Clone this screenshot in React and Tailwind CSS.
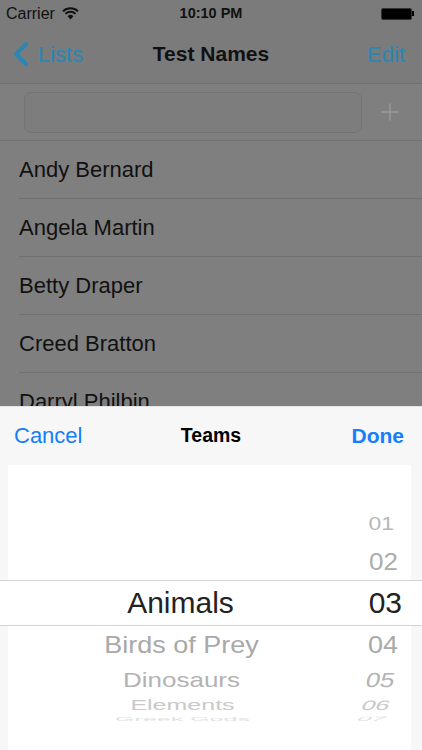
import { ChevronLeft, Plus } from "lucide-react";

const names = ["Andy Bernard", "Angela Martin", "Betty Draper", "Creed Bratton", "Darryl Philbin"];

// picker rows above / below the selection band
const above = [
  { h: 38, num: "01", size: 23, sy: 0.8, color: "#b8b8b8", nr: 28 },
  { h: 37, num: "02", size: 26, sy: 0.92, color: "#acacac", nr: 24 },
];
const below = [
  { h: 38, label: "Birds of Prey", num: "04", size: 27, sy: 0.9, color: "#a9a9a9", nr: 24, lx: 2 },
  { h: 32, label: "Dinosaurs", num: "05", size: 26, sy: 0.78, color: "#b3b3b3", nr: 27, lx: 2, sk: -10 },
  { h: 18, label: "Elements", num: "06", size: 25, sy: 0.55, color: "#c9c9c9", nr: 32, lx: 4, sk: -14 },
  { h: 8, label: "Greek Gods", num: "07", size: 25, sy: 0.25, color: "#e0e0e0", nr: 36, lx: 4, sk: -16 },
];

function PickerRow({ row }) {
  return (
    <div className="relative flex items-center overflow-visible" style={{ height: row.h }}>
      <div className="w-[345px] flex justify-center" style={{ paddingLeft: row.lx || 0 }}>
        {row.label && (
          <span
            className="leading-none whitespace-nowrap"
            style={{ fontSize: row.size, color: row.color, transform: `scaleY(${row.sy})` }}
          >
            {row.label}
          </span>
        )}
      </div>
      <span
        className="absolute leading-none"
        style={{
          fontSize: row.size,
          color: row.color,
          right: row.nr,
          transform: `scaleY(${row.sy}) skewX(${row.sk || 0}deg)`,
        }}
      >
        {row.num}
      </span>
    </div>
  );
}

export default function App() {
  return (
    <div
      className="w-[422px] h-[750px] overflow-hidden bg-[#f7f7f7] flex flex-col"
      style={{ fontFamily: '"Liberation Sans", Arial, sans-serif' }}
    >
      {/* dimmed page behind the sheet */}
      <div className="h-[406px] shrink-0 overflow-hidden bg-[#7f7f7f] text-[#111]">
        {/* status bar + nav */}
        <div className="bg-[#7b7b7b] border-b border-[#707070]">
          <div className="h-[27px] flex items-center justify-between px-[6px]">
            <div className="flex items-center gap-[7px] w-[120px]">
              <span className="text-[16px]">Carrier</span>
              <svg width="17" height="13" viewBox="0 0 17 13">
                <path d="M8.5 12.5 L5.6 9.2 A4.2 4.2 0 0 1 11.4 9.2 Z" fill="#111" />
                <path d="M3.4 6.9 A7.4 7.4 0 0 1 13.6 6.9" stroke="#111" strokeWidth="2" fill="none" />
                <path d="M1 4.4 A10.8 10.8 0 0 1 16 4.4" stroke="#111" strokeWidth="2" fill="none" />
              </svg>
            </div>
            <span className="text-[14.5px] font-bold">10:10 PM</span>
            <div className="w-[120px] flex justify-end items-center pr-[2px]">
              <div className="w-[31px] h-[12px] bg-black rounded-[2px] border border-[#333]" />
              <div className="w-[2px] h-[5px] bg-black" />
            </div>
          </div>
          <div className="h-[56px] flex items-center justify-between px-[13px] pb-[2px]">
            <div className="flex items-center w-[110px] text-[#2a86b4]">
              <ChevronLeft size={40} strokeWidth={2.4} className="-ml-[12px] -mr-[3px]" />
              <span className="text-[22px]">Lists</span>
            </div>
            <span className="text-[21px] font-bold">Test Names</span>
            <div className="w-[110px] text-right text-[22px] text-[#2a86b4] pr-[4px]">Edit</div>
          </div>
        </div>

        {/* add field */}
        <div className="h-[57px] flex items-center pl-[24px] pr-[18px] gap-[14px] border-b border-[#707070]">
          <div className="flex-1 h-[41px] rounded-[7px] bg-[#7d7d7d] border border-[#747474]" />
          <Plus size={28} strokeWidth={1.2} className="text-[#9a9a9a]" />
        </div>

        {/* list */}
        {names.map((n) => (
          <div key={n} className="pl-[19px]">
            <div className="h-[58px] flex items-center border-b border-[#707070] text-[22px]">{n}</div>
          </div>
        ))}
      </div>

      {/* action sheet */}
      <div className="flex-1 flex flex-col bg-[#f7f7f7] border-t border-[#e4e4e4]">
        <div className="h-[58px] flex items-center justify-between px-[14px] pb-[1px]">
          <span className="w-[100px] text-[22px] text-[#147efb]">Cancel</span>
          <span className="text-[19.5px] font-bold text-black">Teams</span>
          <span className="w-[100px] text-right text-[21px] font-bold text-[#147efb] pr-[4px]">Done</span>
        </div>

        <div className="flex-1 flex flex-col">
          <div className="ml-[8px] mr-[11px] bg-white pt-[40px]">
            {above.map((r) => (
              <PickerRow key={r.num} row={{ ...r, nr: r.nr - 11 }} />
            ))}
          </div>
          <div className="h-[46px] bg-white border-y border-[#d4d4d4] relative flex items-center">
            <div className="w-[361px] flex justify-center">
              <span className="text-[30px] leading-none text-[#222]">Animals</span>
            </div>
            <span className="absolute right-[20px] text-[30px] leading-none text-[#222]">03</span>
          </div>
          <div className="flex-1 ml-[8px] mr-[11px] bg-white">
            <div className="h-[95px] overflow-hidden">
              {below.map((r) => (
                <PickerRow key={r.num} row={{ ...r, nr: r.nr - 11 }} />
              ))}
            </div>
          </div>
        </div>
      </div>
    </div>
  );
}
